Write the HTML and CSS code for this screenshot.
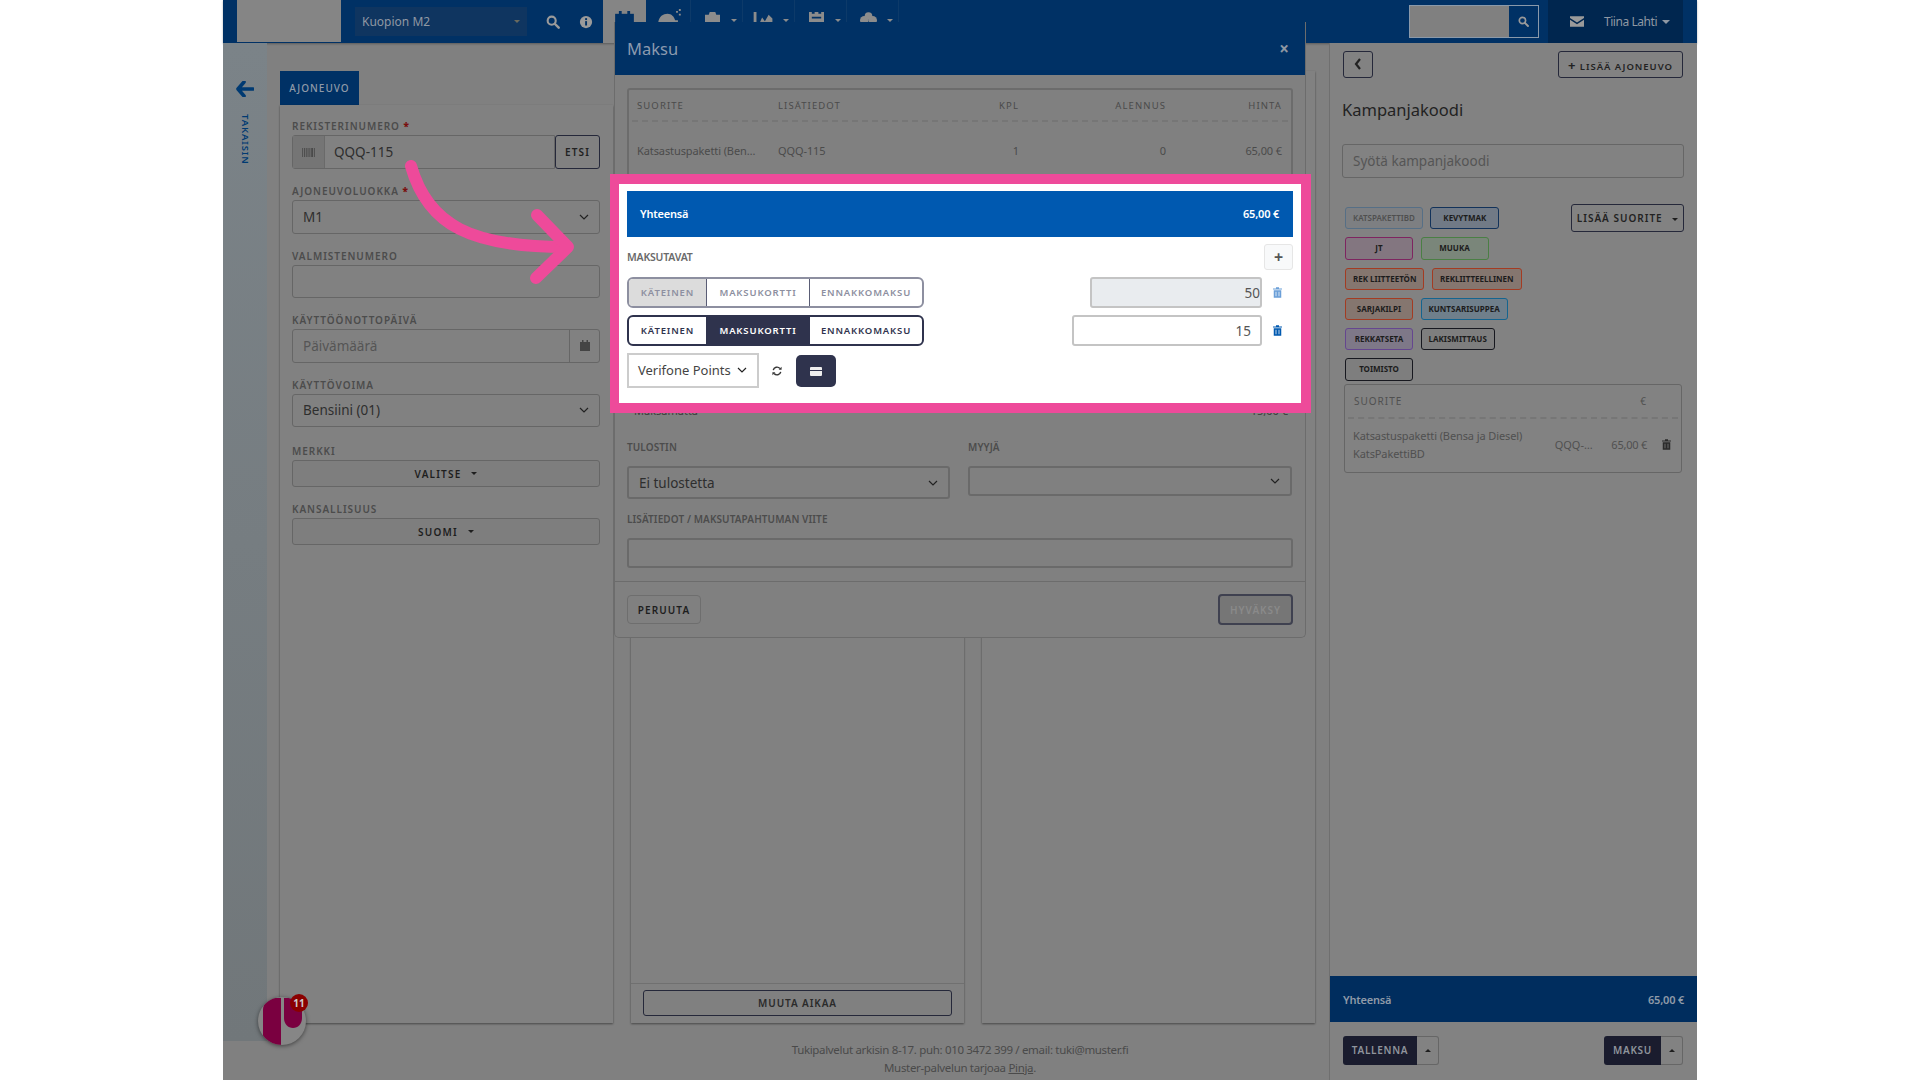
FILE: index.html
```html
<!DOCTYPE html>
<html lang="en">
<head>
  <meta charset="UTF-8" />
  <title>Muster - Maksu</title>
  <link rel="stylesheet" href="styles.css">
</head>
<body>
  <div class="app">
    <header class="topbar">
      <div class="logo-box"></div>
      <div class="site-select"><span>Kuopion M2</span><i class="caret caret-dim"></i></div>
      <svg class="top-icon search-icon" viewBox="0 0 16 16"><circle cx="6.5" cy="6.5" r="4.6" fill="none" stroke="currentColor" stroke-width="2.4"/><path d="M10 10l4.5 4.5" stroke="currentColor" stroke-width="2.8" stroke-linecap="round"/></svg>
      <svg class="top-icon info-icon" viewBox="0 0 16 16"><circle cx="8" cy="8" r="7" fill="currentColor"/><rect x="7" y="7" width="2.2" height="5" fill="#003165"/><rect x="7" y="3.6" width="2.2" height="2.2" fill="#003165"/></svg>
      <nav class="top-nav">
        <div class="nav-item nav-active">
          <svg class="nav-icon cal-icon" viewBox="0 0 20 16"><path d="M0 3h20v13H0z" fill="#003165"/><path d="M4 0h3v4H4zM13 0h3v4h-3z" fill="#003165"/></svg>
        </div>
        <div class="nav-item nav-wash">
          <svg class="nav-icon wash-icon" viewBox="0 0 26 16"><path d="M1 14c1-6 5-9 10-9 4 0 7 3 8 7h3v2H1z" fill="currentColor"/><path d="M20 2h2v2h-2zM23 0h2v2h-2zM23 5h2v2h-2z" fill="currentColor"/></svg>
        </div>
        <div class="nav-item">
          <svg class="nav-icon" viewBox="0 0 18 16"><path d="M1 4h4l1-3h6l1 3h4v12H1z" fill="currentColor"/></svg><i class="caret"></i>
        </div>
        <div class="nav-item nav-chart">
          <svg class="nav-icon chart-icon" viewBox="0 0 21 16"><path d="M0 1h3v15H0zM5 16l4-9 3 4 4-7 4 4v8z" fill="currentColor"/></svg><i class="caret"></i>
        </div>
        <div class="nav-item">
          <svg class="nav-icon" viewBox="0 0 18 16"><path d="M1 1h3v2h3V1h4v2h3V1h3v15H1zM4 6v2h10V6z" fill="currentColor" fill-rule="evenodd"/></svg><i class="caret"></i>
        </div>
        <div class="nav-item">
          <svg class="nav-icon" viewBox="0 0 20 16"><circle cx="5" cy="10" r="5" fill="currentColor"/><circle cx="15" cy="10" r="5" fill="currentColor"/><circle cx="10" cy="5" r="4.5" fill="currentColor"/></svg><i class="caret"></i>
        </div>
      </nav>
      <div class="top-search">
        <div class="top-search-input"></div>
        <div class="top-search-btn">
          <svg viewBox="0 0 16 16"><circle cx="6.5" cy="6.5" r="4.6" fill="none" stroke="currentColor" stroke-width="2.4"/><path d="M10 10l4.5 4.5" stroke="currentColor" stroke-width="2.8" stroke-linecap="round"/></svg>
        </div>
      </div>
      <div class="user-box">
        <svg class="mail-icon" viewBox="0 0 16 12"><path d="M0 0h16v2L8 7 0 2zM0 4l8 5 8-5v8H0z" fill="currentColor"/></svg>
        <span>Tiina Lahti</span><i class="caret caret-user"></i>
      </div>
    </header>

    <div class="main">
      <aside class="back-strip">
        <svg class="back-arrow" viewBox="0 0 18 16"><path d="M8 1L2 8l6 7M3 8h14" fill="none" stroke="currentColor" stroke-width="3.6" stroke-linejoin="round" stroke-linecap="round"/></svg>
        <span class="back-text">TAKAISIN</span>
      </aside>

      <div class="content">
        <div class="columns">
          <section class="col col-left">
            <div class="tab">AJONEUVO</div>
            <div class="panel form-panel">
              <div class="field">
                <label>REKISTERINUMERO <b>*</b></label>
                <div class="reg-row">
                  <div class="input-group">
                    <span class="addon">
                      <svg viewBox="0 0 14 10" class="barcode"><path d="M0 0h1v10H0zM2 0h1v10H2zM4 0h1v10H4zM6 0h1v10H6zM8 0h1v10H8zM10 0h2v10h-2zM13 0h1v10h-1z" fill="currentColor"/></svg>
                    </span>
                    <span class="input-text">QQQ-115</span>
                  </div>
                  <button class="btn-etsi">ETSI</button>
                </div>
              </div>
              <div class="field">
                <label>AJONEUVOLUOKKA <b>*</b></label>
                <div class="select-box"><span>M1</span><svg class="chev" viewBox="0 0 10 6"><path d="M1 1l4 4 4-4" fill="none" stroke="currentColor" stroke-width="1.2"/></svg></div>
              </div>
              <div class="field">
                <label>VALMISTENUMERO</label>
                <div class="select-box"></div>
              </div>
              <div class="field">
                <label>KÄYTTÖÖNOTTOPÄIVÄ</label>
                <div class="select-box date-box">
                  <span class="placeholder">Päivämäärä</span>
                  <span class="date-addon"><svg viewBox="0 0 10 11" class="cal"><path d="M0 2h10v9H0zM2 0h1.500v2H2zM6.500 0H8v2H6.500z" fill="currentColor"/></svg></span>
                </div>
              </div>
              <div class="field field-last-input">
                <label>KÄYTTÖVOIMA</label>
                <div class="select-box"><span>Bensiini (01)</span><svg class="chev" viewBox="0 0 10 6"><path d="M1 1l4 4 4-4" fill="none" stroke="currentColor" stroke-width="1.2"/></svg></div>
              </div>
              <div class="field">
                <label>MERKKI</label>
                <div class="wide-btn">VALITSE <i class="caret caret-dark"></i></div>
              </div>
              <div class="field">
                <label>KANSALLISUUS</label>
                <div class="wide-btn">SUOMI <i class="caret caret-dark"></i></div>
              </div>
            </div>
          </section>

          <section class="col col-mid">
            <div class="panel mid-panel">
              <div class="mid-spacer"></div>
              <div class="mid-foot"><button class="btn-outline">MUUTA AIKAA</button></div>
            </div>
          </section>

          <section class="col col-third">
            <div class="panel third-panel"></div>
          </section>
        </div>
        <footer class="page-foot">
          <p>Tukipalvelut arkisin 8-17. puh: 010 3472 399 / email: tuki@muster.fi</p>
          <p>Muster-palvelun tarjoaa <u>Pinja</u>.</p>
        </footer>
      </div>

      <aside class="cart">
        <div class="cart-top">
          <div class="cart-actions">
            <button class="btn-back"><svg viewBox="0 0 8 12"><path d="M6 1L2 6l4 5" fill="none" stroke="currentColor" stroke-width="2.2"/></svg></button>
            <button class="btn-add"><span class="plus">+</span> LISÄÄ AJONEUVO</button>
          </div>
          <h2>Kampanjakoodi</h2>
          <div class="campaign-input">Syötä kampanjakoodi</div>
          <div class="tag-area">
            <div class="tags">
              <div class="tag-row">
                <span class="tag tag-steel tag-faint">KATSPAKETTIBD</span>
                <span class="tag tag-navy tag-kevyt">KEVYTMAK</span>
              </div>
              <div class="tag-row">
                <span class="tag tag-pink tag-w">JT</span>
                <span class="tag tag-green tag-w">MUUKA</span>
              </div>
              <div class="tag-row">
                <span class="tag tag-red">REK LIITTEETÖN</span>
                <span class="tag tag-red">REKLIITTEELLINEN</span>
              </div>
              <div class="tag-row">
                <span class="tag tag-red tag-w">SARJAKILPI</span>
                <span class="tag tag-cyan">KUNTSARISUPPEA</span>
              </div>
              <div class="tag-row">
                <span class="tag tag-purple tag-w">REKKATSETA</span>
                <span class="tag tag-black">LAKISMITTAUS</span>
              </div>
              <div class="tag-row">
                <span class="tag tag-black tag-w">TOIMISTO</span>
              </div>
            </div>
            <button class="btn-suorite">LISÄÄ SUORITE <i class="caret caret-dark"></i></button>
          </div>
          <div class="cart-table">
            <div class="cart-head"><span>SUORITE</span><span class="cart-eur">€</span></div>
            <div class="cart-row">
              <div class="cart-name">Katsastuspaketti (Bensa ja Diesel)<br>KatsPakettiBD</div>
              <span class="cart-reg">QQQ-…</span>
              <span class="cart-price">65,00 €</span>
              <svg class="trash cart-trash" viewBox="0 0 12 14"><path d="M4 0h4v1.500h4V3H0V1.500h4zM1 4h10v10H1zM3.500 6v6h1V6zM7.500 6v6h1V6z" fill="currentColor" fill-rule="evenodd"/></svg>
            </div>
          </div>
        </div>
        <div class="cart-total"><span>Yhteensä</span><span>65,00 €</span></div>
        <div class="cart-buttons">
          <div class="split"><span class="split-main split-save">TALLENNA</span><span class="split-caret"><i class="caret caret-up"></i></span></div>
          <div class="split"><span class="split-main split-pay">MAKSU</span><span class="split-caret"><i class="caret caret-up"></i></span></div>
        </div>
      </aside>
    </div>
  </div>

  <!-- chat widget -->
  <div class="widget">
    <svg viewBox="0 0 48 48" class="widget-logo"><path d="M5 48V13C5 6 10 1 16 1h7v47z" fill="#7a0040"/><path d="M26 1h18v20c0 6-4 10-9 10s-9-4-9-10z" fill="#7a0040"/></svg>
    <span class="badge">11</span>
  </div>

  <!-- dialog -->
  <div class="modal">
    <div class="modal-head"><span>Maksu</span><span class="modal-x">×</span></div>
    <div class="modal-body">
      <div class="modal-table">
        <div class="mt-row mt-head">
          <span class="c1">SUORITE</span><span class="c2">LISÄTIEDOT</span><span class="c3">KPL</span><span class="c4">ALENNUS</span><span class="c5">HINTA</span>
        </div>
        <div class="mt-row mt-data">
          <span class="c1">Katsastuspaketti (Ben…</span><span class="c2">QQQ-115</span><span class="c3">1</span><span class="c4">0</span><span class="c5">65,00 €</span>
        </div>
      </div>
      <div class="unpaid"><span>Maksamatta</span><span>15,00 €</span></div>
      <div class="modal-grid">
        <div class="m-field">
          <label>TULOSTIN</label>
          <div class="select-box m-select tall"><span>Ei tulostetta</span><svg class="chev" viewBox="0 0 10 6"><path d="M1 1l4 4 4-4" fill="none" stroke="currentColor" stroke-width="1.2"/></svg></div>
        </div>
        <div class="m-field">
          <label>MYYJÄ</label>
          <div class="select-box m-select"><svg class="chev" viewBox="0 0 10 6"><path d="M1 1l4 4 4-4" fill="none" stroke="currentColor" stroke-width="1.2"/></svg></div>
        </div>
      </div>
      <div class="m-field m-note">
        <label>LISÄTIEDOT / MAKSUTAPAHTUMAN VIITE</label>
        <div class="select-box m-select"></div>
      </div>
    </div>
    <div class="modal-foot">
      <button class="btn-cancel">PERUUTA</button>
      <button class="btn-ok">HYVÄKSY</button>
    </div>
  </div>

  <!-- highlighted part of the dialog -->
  <div class="highlight">
    <div class="total-bar"><span>Yhteensä</span><span>65,00 €</span></div>
    <div class="pay-head"><span>MAKSUTAVAT</span><button class="btn-plus">+</button></div>
    <div class="pay-row">
      <div class="seg seg-off">
        <span class="seg-a seg-sel">KÄTEINEN</span><span class="seg-b">MAKSUKORTTI</span><span class="seg-c">ENNAKKOMAKSU</span>
      </div>
      <div class="amount amount-off">50</div>
      <svg class="trash pay-trash trash-off" viewBox="0 0 12 14"><path d="M4 0h4v1.500h4V3H0V1.500h4zM1 4h10v10H1zM3.500 6v6h1V6zM7.500 6v6h1V6z" fill="currentColor" fill-rule="evenodd"/></svg>
    </div>
    <div class="pay-row">
      <div class="seg">
        <span class="seg-a">KÄTEINEN</span><span class="seg-b seg-active">MAKSUKORTTI</span><span class="seg-c">ENNAKKOMAKSU</span>
      </div>
      <div class="amount">15</div>
      <svg class="trash pay-trash" viewBox="0 0 12 14"><path d="M4 0h4v1.500h4V3H0V1.500h4zM1 4h10v10H1zM3.500 6v6h1V6zM7.500 6v6h1V6z" fill="currentColor" fill-rule="evenodd"/></svg>
    </div>
    <div class="terminal-row">
      <div class="terminal-select"><span>Verifone Points</span><svg class="chev" viewBox="0 0 10 6"><path d="M1 1l4 4 4-4" fill="none" stroke="currentColor" stroke-width="1.200"/></svg></div>
      <svg class="refresh" viewBox="0 0 12 12"><path d="M1.500 5A4.600 4.600 0 0 1 9.500 3M10.500 7A4.600 4.600 0 0 1 2.500 9" fill="none" stroke="currentColor" stroke-width="1.700"/><path d="M8 4.500h3.500V1zM4 7.500H.5V11z" fill="currentColor"/></svg>
      <button class="btn-card"><svg viewBox="0 0 12 9"><path d="M0 1a1 1 0 0 1 1-1h10a1 1 0 0 1 1 1v2H0zM0 4h12v4a1 1 0 0 1-1 1H1a1 1 0 0 1-1-1z" fill="currentColor"/></svg></button>
    </div>
  </div>

  <svg class="pink-arrow" viewBox="0 0 200 130">
    <path d="M11 6C28 66 72 87 166 87" fill="none" stroke="#ee4a9a" stroke-width="12" stroke-linecap="round"/>
    <path d="M137 55L168 87L136 118" fill="none" stroke="#ee4a9a" stroke-width="12" stroke-linecap="round" stroke-linejoin="round"/>
  </svg>
</body>
</html>
```

FILE: styles.css
```css
* { box-sizing: border-box; }

body {
  margin: 0;
  background: #fff;
  font-family: "Noto Sans", sans-serif;
  color: #2b2b2b;
  height: 1080px;
  overflow: hidden;
  position: relative;
}

button { font-family: inherit; padding: 0; cursor: pointer; }
p { margin: 0; }

.app {
  width: 1474px;
  height: 1080px;
  margin: 0 auto;
  background: #808080;
  display: flex;
  flex-direction: column;
}

/* top bar */
.topbar {
  height: 43px;
  flex: none;
  background: #003165;
  display: flex;
  align-items: stretch;
  padding-left: 14px;
  color: #8f98a3;
  box-shadow: 0 1px 2px rgba(0,0,0,.3);
}
.logo-box { width: 104px; background: #858585; height: 42px; }
.site-select {
  width: 172px;
  height: 29px;
  margin: 7px 0 0 14px;
  background: #0f3560;
  display: flex;
  align-items: center;
  justify-content: space-between;
  padding: 0 7px;
  font-size: 12px;
  color: #8f98a3;
}
.top-icon { width: 14px; height: 14px; margin-top: 15px; color: #9a9a9a; }
.search-icon { margin-left: 19px; }
.info-icon { margin-left: 19px; }

.top-nav { display: flex; margin-left: 10px; }
.nav-item {
  width: 52px;
  display: flex;
  padding: 11px 5px 0 13px;
  border-right: 1px solid #0d3a69;
  color: #8c8c8c;
}
.nav-active { width: 43px; background: #858585; padding-left: 12px; border: 0; }
.nav-wash { width: 45px; padding: 9px 0 0 11px; }
.nav-chart { padding-left: 10px; }
.nav-icon { width: 17px; height: 15px; }
.cal-icon { width: 19px; }
.wash-icon { width: 25px; height: 15px; }
.chart-icon { width: 21px; }

.caret {
  display: inline-block;
  width: 0; height: 0;
  border-left: 3px solid transparent;
  border-right: 3px solid transparent;
  border-top: 3px solid #8c8c8c;
}
.nav-item .caret { margin: 8px 0 0 auto; }
.caret-dim { border-top-color: #6a6a5e; }
.caret-dark { border-top-color: #1e1e1e; vertical-align: middle; margin-left: 6px; }
.caret-user { border-top-color: #8f98a3; border-left-width: 4px; border-right-width: 4px; border-top-width: 4px; }
.caret-up { border-top: 0; border-bottom: 3px solid #1e1e1e; }

.top-search {
  margin: 5px 0 0 auto;
  height: 33px;
  display: flex;
  border: 1px solid #8a99aa;
  background: #808080;
}
.top-search-input { width: 99px; }
.top-search-btn {
  width: 29px;
  background: #003165;
  display: flex;
  align-items: center;
  justify-content: center;
  color: #9a9a9a;
}
.top-search-btn svg { width: 11px; height: 11px; }
.user-box {
  width: 135px;
  margin: 0 14px 0 9px;
  background: #00264f;
  display: flex;
  align-items: center;
  padding-left: 22px;
  font-size: 12px;
  gap: 5px;
}
.user-box span { margin-left: 15px; letter-spacing: -.45px; }
.mail-icon { width: 14px; height: 11px; color: #9a9a9a; }

/* main area */
.main { flex: 1; display: flex; min-height: 0; }

.back-strip {
  width: 44px;
  height: 998px;
  flex: none;
  background: linear-gradient(#7b8388, #71777a);
  display: flex;
  flex-direction: column;
  align-items: center;
  padding-top: 38px;
  color: #003a72;
}
.back-arrow { width: 18px; height: 16px; }
.back-text {
  writing-mode: vertical-rl;
  font-size: 9.500px;
  font-weight: 600;
  letter-spacing: .9px;
  margin-top: 17px;
}

.content { flex: 1; display: flex; flex-direction: column; min-width: 0; }
.columns { display: flex; padding: 28px 14px 0 13px; gap: 18px; height: 980px; flex: none; }
.col { display: flex; flex-direction: column; width: 333px; }
.panel {
  flex: 1;
  background: #818181;
  box-shadow: 0 1px 2px rgba(0,0,0,.45);
  display: flex;
  flex-direction: column;
}

.tab {
  width: 79px;
  height: 34px;
  background: #003165;
  color: #8f9aa8;
  font-size: 10px;
  font-weight: 500;
  letter-spacing: 1px;
  display: flex;
  align-items: center;
  justify-content: center;
}
.form-panel { padding: 14px 13px 0 12px; }

.field { margin-bottom: 15px; }
.field-last-input { margin-bottom: 17px; }
.field label, .m-field label {
  display: block;
  font-size: 10px;
  font-weight: 600;
  line-height: 14px;
  letter-spacing: .95px;
  color: #4c4c4c;
  margin-bottom: 2px;
}
.field label b { color: #7a0f0f; }

.reg-row { display: flex; }
.input-group {
  flex: 1;
  height: 34px;
  display: flex;
  border: 1px solid #666;
  border-radius: 3px 0 0 3px;
}
.addon {
  width: 32px;
  background: #757575;
  border-right: 1px solid #6a6a6a;
  display: flex;
  align-items: center;
  justify-content: center;
  color: #4a4a4a;
}
.barcode { width: 13px; height: 9px; }
.input-text { font-size: 13.500px; line-height: 32px; padding-left: 9px; color: #2e2e2e; }
.btn-etsi {
  width: 45px;
  height: 34px;
  border: 1px solid #25283a;
  border-radius: 3px;
  background: #818181;
  color: #222;
  font-size: 10px;
  font-weight: 600;
  letter-spacing: 1.100px;
}

.select-box {
  height: 33.500px;
  border: 1px solid #666;
  border-radius: 3px;
  display: flex;
  align-items: center;
  justify-content: space-between;
  padding: 0 10px;
  font-size: 13.500px;
  color: #2e2e2e;
}
.chev { width: 10px; height: 6px; color: #222; flex: none; }
.placeholder { color: #555; }
.date-box { padding-right: 0; }
.date-addon {
  width: 30px;
  height: 100%;
  border-left: 1px solid #666;
  display: flex;
  align-items: center;
  justify-content: center;
  color: #444;
}
.cal { width: 10px; height: 11px; }

.wide-btn {
  height: 27px;
  border: 1px solid #666;
  border-radius: 3px;
  background: #7e7e7e;
  display: flex;
  align-items: center;
  justify-content: center;
  font-size: 10px;
  font-weight: 600;
  letter-spacing: 1.200px;
  color: #1e1e1e;
}
.wide-btn .caret { margin-left: 10px; }

.mid-spacer { flex: 1; }
.mid-foot { height: 40px; border-top: 1px solid #707070; padding: 6px 12px 0; }
.btn-outline {
  width: 100%;
  height: 26px;
  background: #808080;
  border: 1px solid #25283a;
  border-radius: 3px;
  color: #2a2a2a;
  font-size: 10px;
  font-weight: 600;
  letter-spacing: .9px;
}

.page-foot {
  padding-left: 324px;
  text-align: center;
  font-size: 11.500px;
  line-height: 18px;
  letter-spacing: -.33px;
  color: #4a4a4a;
  margin-top: 18px;
}

/* right column */
.cart {
  width: 368px;
  flex: none;
  border-left: 1px solid #6f6f6f;
  display: flex;
  flex-direction: column;
  background: #828282;
}
.cart-top { flex: 1; padding: 8px 14px 0 12px; }
.cart-actions { display: flex; justify-content: space-between; }
.btn-back {
  width: 30px;
  height: 27px;
  margin-left: 1px;
  background: none;
  border: 1px solid #25283a;
  border-radius: 3px;
  color: #222;
}
.btn-back svg { width: 8px; height: 12px; }
.btn-add {
  width: 125px;
  height: 27px;
  background: none;
  border: 1px solid #25283a;
  border-radius: 3px;
  font-size: 9.500px;
  font-weight: 600;
  letter-spacing: .95px;
  color: #222;
  white-space: nowrap;
}
.plus { font-size: 13px; font-weight: 700; }
.cart h2 { margin: 20px 0 0; font-size: 16.500px; font-weight: 400; line-height: 24px; color: #222; }
.campaign-input {
  margin: 22px -1px 0 0;
  height: 34px;
  border: 1px solid #666;
  border-radius: 3px;
  font-size: 13.500px;
  line-height: 32px;
  padding-left: 10px;
  color: #555;
}

.tag-area { display: flex; justify-content: space-between; padding: 29px 0 0 3px; margin-right: -1px; }
.tags { display: flex; flex-direction: column; gap: 8px; }
.tag-row { display: flex; gap: 7.500px; }
.tag {
  height: 22.300px;
  padding: 0 7px;
  border: 1.500px solid;
  border-radius: 3px;
  font-size: 8px;
  font-weight: 700;
  line-height: 19.500px;
  color: #1c1c1c;
  text-align: center;
  white-space: nowrap;
}
.tag-w { width: 68px; padding: 0; }
.tag-kevyt { width: 69px; padding: 0; }
.tag-faint { color: #4f4f4f; font-weight: 600; }
.tag-steel { border-color: #566f86; background: #7d7f82; }
.tag-navy { border-color: #12325a; background: #717a86; }
.tag-pink { border-color: #7e2560; background: #837680; }
.tag-green { border-color: #4a7f44; background: #7a867a; }
.tag-red { border-color: #a33b22; background: #85766f; }
.tag-cyan { border-color: #14648f; background: #6f7f8b; }
.tag-purple { border-color: #65468f; background: #7e7888; }
.tag-black { border-color: #17181f; background: #7e7e7e; }
.btn-suorite {
  margin-top: -3px;
  width: 113px;
  height: 28px;
  background: none;
  border: 1px solid #25283a;
  border-radius: 3px;
  font-size: 10px;
  font-weight: 600;
  letter-spacing: 1px;
  color: #222;
  white-space: nowrap;
}
.cart-table {
  margin: 3px 1px 0 2px;
  height: 89px;
  border: 1px solid #666;
  border-radius: 3px;
  padding: 0 3px;
  color: #505050;
}
.cart-head {
  height: 34px;
  border-bottom: 2px dashed #767676;
  display: flex;
  align-items: center;
  padding: 0 6px;
  font-size: 10px;
  letter-spacing: 1px;
}
.cart-eur { margin-left: 238px; }
.cart-row { display: flex; align-items: center; padding: 8px 7px 0 5px; font-size: 11px; }
.cart-name { width: 203px; line-height: 18px; white-space: nowrap; letter-spacing: -.1px; }
.cart-reg { width: 57px; }
.cart-price { width: 51px; letter-spacing: -.2px; }
.trash { width: 9px; height: 11px; flex: none; }
.cart-trash { color: #2b2b2b; }

.cart-total {
  height: 46px;
  flex: none;
  background: #002d5e;
  color: #8f9aa8;
  display: flex;
  align-items: center;
  justify-content: space-between;
  padding: 0 13px;
  font-size: 11px;
  font-weight: 600;
  letter-spacing: -.2px;
}
.cart-buttons {
  height: 58px;
  flex: none;
  display: flex;
  justify-content: space-between;
  padding: 14px 14px 0 13px;
}
.split { display: flex; height: 29px; }
.split-main {
  background: #1a1c2e;
  color: #8f949c;
  font-size: 10px;
  font-weight: 600;
  letter-spacing: .7px;
  text-align: center;
  line-height: 29px;
  border-radius: 3px 0 0 3px;
}
.split-save { width: 74px; }
.split-pay { width: 57px; }
.split-caret {
  width: 22px;
  border: 1px solid #666;
  border-left: 0;
  border-radius: 0 3px 3px 0;
  display: flex;
  align-items: center;
  justify-content: center;
}

/* chat widget */
.widget {
  position: absolute;
  left: 258px;
  top: 997px;
  width: 48px;
  height: 48px;
  border-radius: 50%;
  background: #868686;
  box-shadow: 0 1px 4px rgba(0,0,0,.5);
}
.widget-logo { width: 48px; height: 48px; border-radius: 50%; display: block; }
.badge {
  position: absolute;
  left: 32px;
  top: -3px;
  width: 18px;
  height: 18px;
  border-radius: 50%;
  background: #8a0000;
  color: #ccc;
  font-size: 10px;
  font-weight: 700;
  line-height: 18px;
  text-align: center;
}

/* dialog */
.modal {
  position: absolute;
  left: 614px;
  top: 22px;
  width: 692px;
  height: 616px;
  background: #808080;
  border: 1px solid #6c6c6c;
  border-top: 0;
  border-radius: 0 0 5px 5px;
  display: flex;
  flex-direction: column;
}
.modal-head {
  height: 53px;
  flex: none;
  background: #003165;
  color: #8b9aaf;
  display: flex;
  align-items: center;
  justify-content: space-between;
  padding: 0 16px 0 12px;
  font-size: 16.500px;
  font-weight: 400;
}
.modal-x { font-size: 17px; font-weight: 700; color: #8f98a3; }
.modal-body { flex: 1; padding: 13px 12px 0 12px; }
.modal-table {
  height: 100px;
  border: 2px solid #6c6c6c;
  border-radius: 3px;
  padding: 0 3px;
  color: #4b4b4b;
}
.mt-row { display: flex; align-items: center; padding: 0 5px; }
.mt-head {
  height: 32px;
  border-bottom: 2px dashed #767676;
  font-size: 9.500px;
  letter-spacing: 1.100px;
}
.mt-data { height: 56px; font-size: 11px; letter-spacing: -.1px; }
.c1 { width: 141px; white-space: nowrap; }
.c2 { width: 190px; }
.c3 { width: 51px; text-align: right; }
.c4 { width: 147px; text-align: right; }
.c5 { width: 116px; text-align: right; }

.unpaid {
  display: flex;
  justify-content: space-between;
  padding: 0 5px 0 7px;
  margin-top: 215px;
  height: 16px;
  font-size: 11px;
  line-height: 16px;
  color: #3c3c3c;
}
.modal-grid { display: grid; grid-template-columns: 323px 324px; column-gap: 18px; margin-top: 21px; }
.m-field label { letter-spacing: .1px; margin-bottom: 12px; }
.m-select { height: 30px; border-width: 2px; border-color: #6a6a6a; }
.m-select.tall { height: 33px; }
.m-select .chev:only-child { margin-left: auto; }
.m-note { margin-top: 13px; }
.m-note label { margin-bottom: 12px; }

.modal-foot {
  height: 56px;
  flex: none;
  border-top: 1px solid #6c6c6c;
  display: flex;
  justify-content: space-between;
  align-items: center;
  padding: 0 12px;
}
.btn-cancel {
  width: 74px;
  height: 29px;
  background: #808080;
  border: 1px solid #6e6e6e;
  border-radius: 4px;
  color: #1e1e1e;
  font-size: 10px;
  font-weight: 600;
  letter-spacing: 1.100px;
}
.btn-ok {
  width: 75px;
  height: 31px;
  background: #767676;
  border: 2px solid #3f4150;
  border-radius: 4px;
  color: #8a8a8a;
  font-size: 10px;
  font-weight: 600;
  letter-spacing: 1px;
}

/* highlight frame */
.highlight {
  position: absolute;
  left: 610px;
  top: 174px;
  width: 701px;
  height: 239px;
  border: 10px solid #ee4a9a;
  border-width: 10px 10px 10px 9px;
  background: #fff;
  padding: 7px 8px 0 8px;
}
.total-bar {
  height: 46px;
  background: #0059b0;
  color: #fff;
  display: flex;
  align-items: center;
  justify-content: space-between;
  padding: 0 14px 2px 13px;
  font-size: 11px;
  font-weight: 600;
  letter-spacing: -.2px;
}
.pay-head {
  display: flex;
  justify-content: space-between;
  align-items: center;
  height: 26px;
  margin-top: 7px;
  font-size: 10.500px;
  font-weight: 600;
  letter-spacing: -.2px;
  color: #6a6a6a;
}
.btn-plus {
  width: 29px;
  height: 26px;
  background: #f8f9fa;
  border: 1px solid #e6e6e6;
  border-radius: 3px;
  color: #555;
  font-size: 16px;
  font-weight: 700;
  line-height: 22px;
}
.pay-row { display: flex; align-items: center; height: 31px; margin-top: 7px; }
.seg {
  width: 297px;
  height: 31px;
  display: flex;
  border: 2px solid #2f334d;
  border-radius: 6px;
  overflow: hidden;
  font-size: 9.500px;
  font-weight: 600;
  letter-spacing: .85px;
  color: #2f334d;
  text-align: center;
  line-height: 27px;
}
.seg span { border-right: 1px solid #2f334d; }
.seg-a { width: 78px; }
.seg-b { width: 103px; }
.seg-c { flex: 1; border-right: 0 !important; }
.seg-active { background: #2f334d; color: #fff; }
.seg-off { border-color: #8d8fa0; color: #8d8fa0; }
.seg-off span { border-right-color: #5a5d75; }
.seg-sel { background: #dcdcdc; }

.amount {
  width: 190px;
  height: 31px;
  margin-left: auto;
  border: 2px solid #c4c4c4;
  border-radius: 3px;
  font-size: 13.500px;
  line-height: 29px;
  text-align: right;
  padding-right: 9px;
  color: #555;
}
.amount-off { width: 172px; background: #e9ecef; padding-right: 0; }
.pay-trash { color: #0059b0; margin: 0 11px 0 11px; }
.trash-off { color: #6b9fd8; }

.terminal-row { display: flex; align-items: center; margin-top: 7px; }
.terminal-select {
  width: 132px;
  height: 35px;
  border: 2px solid #ccc;
  display: flex;
  align-items: center;
  justify-content: space-between;
  padding: 0 10px 2px 9px;
  font-size: 13px;
  color: #444;
  white-space: nowrap;
}
.refresh { width: 10px; height: 10px; margin-left: 13px; color: #333; }
.btn-card {
  width: 40px;
  height: 32px;
  margin-left: 14px;
  border: 0;
  border-radius: 5px;
  background: #2f334d;
  color: #eee;
}
.btn-card svg { width: 12px; height: 9px; }

.pink-arrow {
  position: absolute;
  left: 400px;
  top: 160px;
  width: 200px;
  height: 130px;
}
```
